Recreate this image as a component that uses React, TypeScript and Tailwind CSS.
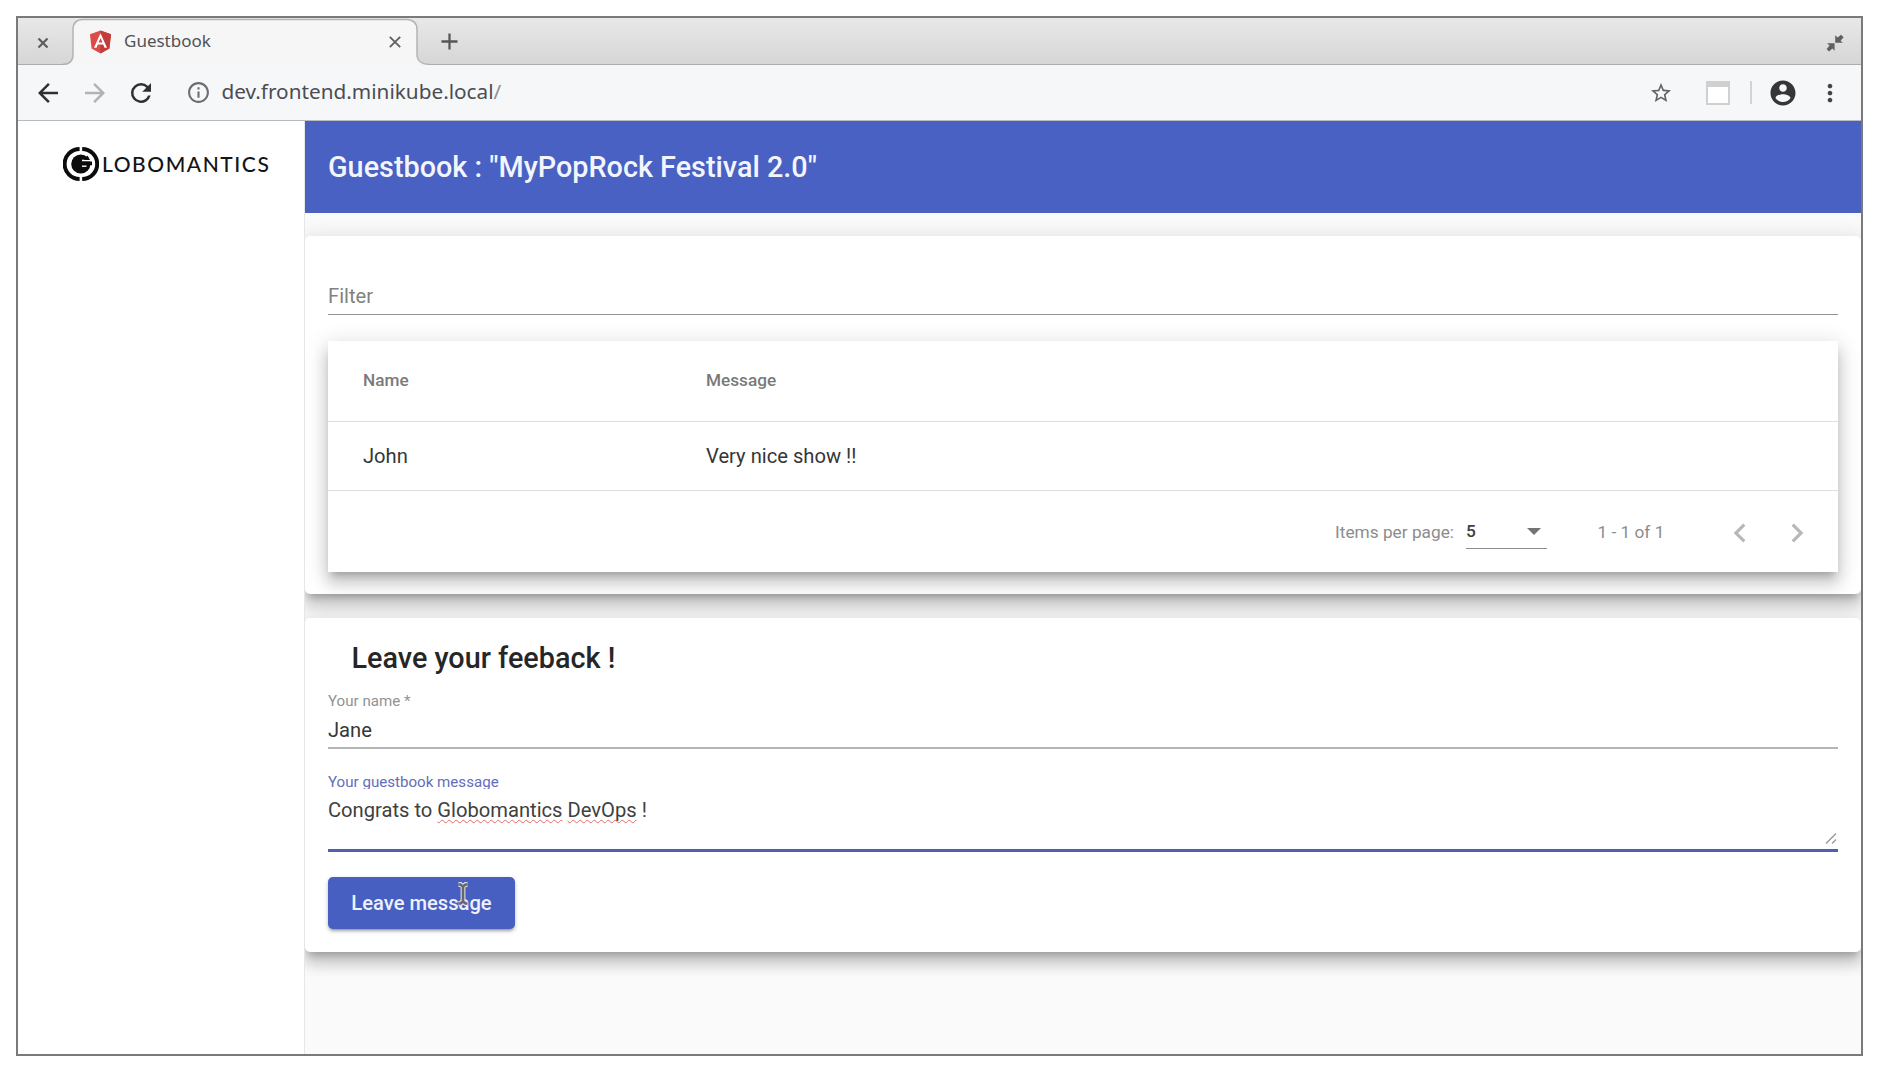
import type { ReactNode } from 'react';

const elevation =
  'shadow-[0_7px_7px_-4px_rgba(0,0,0,0.2),0_12px_14px_1px_rgba(0,0,0,0.14),0_4px_20px_3px_rgba(0,0,0,0.12)]';

function MaterialIcon({ d, className }: { d: string; className: string }) {
  return (
    <svg viewBox="0 0 24 24" fill="currentColor" className={`shrink-0 ${className}`}>
      <path d={d} />
    </svg>
  );
}

function TabStrip() {
  return (
    <div className="relative flex h-[47px] shrink-0 items-center border-b border-[#acacac] bg-linear-to-b from-[#e8e8e8] to-[#d6d6d6]">
      <svg viewBox="0 0 12 12" className="mt-[3px] ml-[19px] size-[12px] shrink-0">
        <path d="M1.5 1.5l9 9M10.5 1.5l-9 9" stroke="#5d5d5d" strokeWidth="2.2" />
      </svg>
      <div className="relative ml-[14px] h-[47px] w-[366px] shrink-0">
        <svg viewBox="0 0 366 49" preserveAspectRatio="none" className="absolute top-0 left-0 h-[48px] w-[366px]">
          <path
            d="M0 47.5C7 47.5 10 43 10 37V12C10 5 13 1.5 20 1.5H343C350 1.5 354 5 354 12V37C354 43 358 47.5 366 47.5V49H0Z"
            fill="#f6f6f7"
          />
          <path
            d="M0 47.3C7 47.3 10 43 10 37V12C10 5 13 1.5 20 1.5H343C350 1.5 354 5 354 12V37C354 43 358 47.3 366 47.3"
            fill="none"
            stroke="#b4b4b4"
            strokeWidth="1.5"
          />
        </svg>
        <div className="relative flex h-[47px] items-center pl-[26px]">
          <svg viewBox="0 0 24 25" className="mt-[1px] h-[24px] w-[23px] shrink-0">
            <path d="M12 0.5L23 4.4L21.3 19.2L12 24.5L2.7 19.2L1 4.4Z" fill="#dd4b48" />
            <path d="M12 0.5L23 4.4L21.3 19.2L12 24.5Z" fill="#c03d3b" />
            <path
              fillRule="evenodd"
              d="M12 3.4L5.2 18.6H7.8L9.2 15.2H14.8L16.2 18.6H18.8ZM12 8.3L14 13H10Z"
              fill="#fff"
            />
          </svg>
          <span className="ml-[12px] flex-1 pb-[1px] font-['Noto_Sans',sans-serif] text-[17px] leading-[24px] text-[#505256]">
            Guestbook
          </span>
          <svg viewBox="0 0 12 12" className="mt-[2px] mr-[28px] size-[12px] shrink-0">
            <path d="M0.8 0.8l10.4 10.4M11.2 0.8L0.8 11.2" stroke="#5d5f62" strokeWidth="1.8" />
          </svg>
        </div>
      </div>
      <svg viewBox="0 0 18 18" className="mt-[1px] ml-[12px] size-[17px] shrink-0">
        <path d="M9 0.5v17M0.5 9h17" stroke="#55575a" strokeWidth="2.4" />
      </svg>
      <svg viewBox="0 0 18 18" className="mt-[4px] mr-[17px] ml-auto size-[18px] shrink-0" fill="#606060">
        <path d="M9.2 1.2V8.8H16.8L14.6 6.7L17.6 3.2L15 0.8L11.6 3.6Z" />
        <path d="M8.6 9.2V16.8L6.4 14.4L3 17.4L0.6 15L3.6 11.4L1 9.2Z" />
      </svg>
    </div>
  );
}

function AddressBar() {
  return (
    <div className="flex h-[56px] shrink-0 items-center border-b border-[#b9bac0] bg-[#f6f7f9]">
      <MaterialIcon
        className="ml-[15px] size-[30px] text-[#303032]"
        d="M20 11H7.83l5.59-5.59L12 4l-8 8 8 8 1.41-1.41L7.83 13H20v-2z"
      />
      <MaterialIcon
        className="ml-[17px] size-[30px] text-[#b2b3b5]"
        d="M12 4l-1.41 1.41L16.17 11H4v2h12.17l-5.58 5.59L12 20l8-8z"
      />
      <MaterialIcon
        className="ml-[16px] size-[30px] text-[#303032]"
        d="M17.65 6.35A7.96 7.96 0 0 0 12 4a8 8 0 1 0 7.73 10h-2.08A6 6 0 1 1 12 6c1.66 0 3.14.69 4.22 1.78L13 11h7V4l-2.35 2.35z"
      />
      <MaterialIcon
        className="ml-[30px] size-[25px] text-[#6b6d71]"
        d="M11 17h2v-6h-2v6zm1-15C6.48 2 2 6.48 2 12s4.48 10 10 10 10-4.48 10-10S17.52 2 12 2zm0 18c-4.41 0-8-3.59-8-8s3.59-8 8-8 8 3.59 8 8-3.59 8-8 8zM11 9h2V7h-2v2z"
      />
      <span className="ml-[10.5px] flex-1 pb-[3px] font-['Noto_Sans',sans-serif] text-[20.75px] leading-[28px] text-[#4a4d53]">
        dev.frontend.minikube.local<span className="text-[#8d9096]">/</span>
      </span>
      <MaterialIcon
        className="size-[24px] text-[#5f6165]"
        d="M22 9.24l-7.19-.62L12 2 9.19 8.63 2 9.24l5.46 4.73L5.82 21 12 17.27 18.18 21l-1.63-7.03L22 9.24zM12 15.4l-3.76 2.27 1-4.28-3.32-2.88 4.38-.38L12 6.1l1.71 4.04 4.38.38-3.32 2.88 1 4.28L12 15.4z"
      />
      <div className="ml-[33px] h-[24px] w-[24px] shrink-0 border-2 border-t-[6px] border-[#d0d0d0] bg-white" />
      <div className="ml-[20px] h-[23px] w-[2px] shrink-0 bg-[#d2d3d5]" />
      <MaterialIcon
        className="ml-[16px] size-[30px] text-[#363638]"
        d="M12 2C6.48 2 2 6.48 2 12s4.48 10 10 10 10-4.48 10-10S17.52 2 12 2zm0 3c1.66 0 3 1.34 3 3s-1.34 3-3 3-3-1.34-3-3 1.34-3 3-3zm0 14.2c-2.5 0-4.71-1.28-6-3.22.03-1.99 4-3.08 6-3.08 1.99 0 5.97 1.09 6 3.08-1.29 1.94-3.5 3.22-6 3.22z"
      />
      <MaterialIcon
        className="mr-[17px] ml-[18px] size-[28px] text-[#444446]"
        d="M12 8c1.1 0 2-.9 2-2s-.9-2-2-2-2 .9-2 2 .9 2 2 2zm0 2c-1.1 0-2 .9-2 2s.9 2 2 2 2-.9 2-2-.9-2-2-2zm0 6c-1.1 0-2 .9-2 2s.9 2 2 2 2-.9 2-2-.9-2-2-2z"
      />
    </div>
  );
}

function Logo() {
  return (
    <div className="mt-[25px] ml-[45px] flex items-center">
      <svg viewBox="0 0 36 36" className="size-[36px] shrink-0">
        <g fill="none" stroke="#0c0c0c" strokeWidth="4">
          <path d="M19.2 3A15 15 0 0 1 19.2 33" />
          <path d="M16.6 3A15 15 0 0 0 16.6 33" />
        </g>
        <circle cx="17.8" cy="18" r="9.6" fill="#0c0c0c" />
        <path d="M19 14.6H31" stroke="#fff" strokeWidth="1.8" />
        <path d="M24.5 9.5L27 14H21Z" fill="#0c0c0c" />
        <path d="M19 17.4H29" stroke="#0c0c0c" strokeWidth="3.8" />
        <path d="M19 20.2H23.5" stroke="#fff" strokeWidth="1.4" />
      </svg>
      <span className="ml-[3px] font-['Lato',sans-serif] text-[21px] leading-[30px] font-medium tracking-[1.55px] text-[#151515]">
        LOBOMANTICS
      </span>
    </div>
  );
}

function Misspelled({ children }: { children: ReactNode }) {
  return (
    <span className="underline decoration-[#e26a6a] decoration-wavy decoration-[1px] underline-offset-[2px] [text-decoration-skip-ink:none]">
      {children}
    </span>
  );
}

function GuestbookTable() {
  const rows = [{ name: 'John', message: 'Very nice show !!' }];
  return (
    <div className={`mt-[26px] h-[231px] bg-white ${elevation}`}>
      <div className="flex h-[81px] items-center border-b border-[#dedede] pl-[35px] text-[17.2px] font-medium text-[#7a7a7a]">
        <div className="w-[343px]">Name</div>
        <div>Message</div>
      </div>
      {rows.map((row) => (
        <div
          key={row.name}
          className="flex h-[69px] items-center border-b border-[#dedede] pl-[35px] text-[20.16px] text-[#363636]"
        >
          <div className="w-[343px]">{row.name}</div>
          <div>{row.message}</div>
        </div>
      ))}
      <div className="flex h-[81px] items-center justify-end pt-[2px] text-[17.28px] text-[#8c8c8c]">
        <span>Items per page:</span>
        <div className="ml-[12px] flex h-[33px] w-[80.5px] items-center justify-between border-b border-[#8c8c8c] pr-[6px] text-[#404040]">
          <span className="font-medium">5</span>
          <svg viewBox="0 0 14 7" className="-mt-[1px] h-[7px] w-[14px]">
            <path d="M0 0H14L7 7Z" fill="#747474" />
          </svg>
        </div>
        <span className="ml-[51px] w-[68px]">1 - 1 of 1</span>
        <MaterialIcon
          className="ml-[55px] size-[38px] text-[#b8b8b8]"
          d="M15.41 7.41L14 6l-6 6 6 6 1.41-1.41L10.83 12z"
        />
        <MaterialIcon
          className="mr-[22px] ml-[19.5px] size-[38px] text-[#b8b8b8]"
          d="M10 6L8.59 7.41 13.17 12l-4.58 4.59L10 18l6-6z"
        />
      </div>
    </div>
  );
}

function FeedbackForm() {
  return (
    <section className={`relative mt-[24px] h-[334px] rounded-[5px] bg-white px-[23px] pt-[23px] ${elevation}`}>
      <h2 className="pl-[23.5px] text-[28.8px] leading-[34px] font-medium text-[#262626]">Leave your feeback !</h2>
      <div className="mt-[17px] border-b-2 border-[#b5b5b5] pb-[4px]">
        <div className="h-[18px] text-[15.12px] leading-[18px] text-[#929292]">Your name *</div>
        <div className="mt-[7px] text-[20.16px] leading-[26px] text-[#363636]">Jane</div>
      </div>
      <div className="relative mt-[24px] h-[79px] border-b-[3px] border-[#5060b0]">
        <div className="h-[16px] overflow-hidden text-[15.12px] leading-[18px] text-[#646dba]">
          Your guestbook message
        </div>
        <div className="mt-[8px] text-[20.16px] leading-[26px] text-[#404040]">
          Congrats to <Misspelled>Globomantics</Misspelled> <Misspelled>DevOps</Misspelled> !
        </div>
        <svg viewBox="0 0 12 12" className="absolute right-[1px] bottom-[5px] size-[12px]">
          <path d="M1 11.5L11 1.5M7 11.5L11 7.5" stroke="#989898" strokeWidth="1.4" />
        </svg>
      </div>
      <button className="relative mt-[25px] flex h-[52px] w-[187px] items-center justify-center rounded-[5px] bg-[#465fc1] text-[20.16px] font-medium text-[#eef1fc] shadow-[0_3px_3px_-2px_rgba(0,0,0,0.3),0_2px_4px_0_rgba(0,0,0,0.25)]">
        Leave message
        <svg viewBox="0 0 14 28" className="absolute top-[3px] left-[128px] h-[28px] w-[14px]">
          <path
            d="M2.5 4.5H4.5L7 6.5V21.5L4.5 23.5H2.5M11.5 4.5H9.5L7 6.5M7 21.5L9.5 23.5H11.5"
            fill="none"
            stroke="#dcdce4"
            strokeWidth="4.8"
          />
          <path
            d="M2.5 4.5H4.5L7 6.5V21.5L4.5 23.5H2.5M11.5 4.5H9.5L7 6.5M7 21.5L9.5 23.5H11.5"
            fill="none"
            stroke="#66666e"
            strokeWidth="2.6"
          />
        </svg>
      </button>
    </section>
  );
}

export default function App() {
  return (
    <div className="h-[1072px] w-[1879px] bg-white pt-[16px] pl-[16px] font-['Roboto',sans-serif]">
      <div className="flex h-[1040px] w-[1847px] flex-col overflow-hidden border-2 border-[#7a7a7a] bg-white">
        <TabStrip />
        <AddressBar />
        <div className="flex min-h-0 flex-1">
          <aside className="w-[287px] shrink-0 border-r border-[#e6e6e6] bg-white">
            <Logo />
          </aside>
          <main className="min-w-0 flex-1 overflow-hidden bg-[#fafafa]">
            <header className="flex h-[92px] items-center bg-[#4861c2] pt-[2px] pl-[23px] text-[28.8px] font-medium text-[#f3f5fd]">
              Guestbook : "MyPopRock Festival 2.0"
            </header>
            <section className={`mt-[23px] h-[358px] rounded-[5px] bg-white px-[23px] pt-[44px] ${elevation}`}>
              <div className="flex h-[35px] items-start border-b border-[#949494] pt-[2px] text-[20.16px] leading-[28px] text-[#828282]">
                Filter
              </div>
              <GuestbookTable />
            </section>
            <FeedbackForm />
          </main>
        </div>
      </div>
    </div>
  );
}
